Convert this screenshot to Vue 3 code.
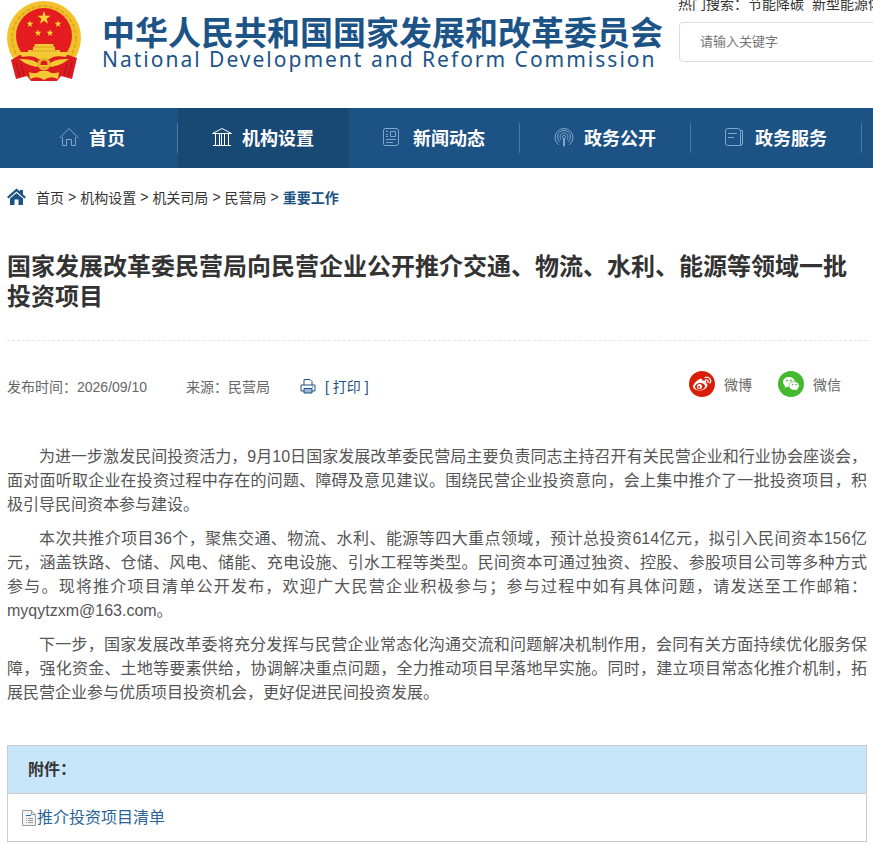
<template>
  <div class="page">
    <!-- Header -->
    <header class="top">
      <a class="brand" href="#">
        <svg class="emblem" viewBox="0 0 76 82" aria-hidden="true">
          <circle cx="38" cy="38" r="37" fill="#f3c22b" />
          <circle cx="38" cy="38" r="32" fill="none" stroke="#e0a822" stroke-width="2" stroke-dasharray="4 2" />
          <circle cx="38" cy="36" r="28" fill="#e41b1f" />
          <path d="M14 55 L62 55 L71 58 L66 79 L55 76 L51 81 H25 L21 76 L10 79 L5 60 Z" fill="#dc1c20" />
          <path d="M14 52 H62 L60 57 Q48 55 44 59 H32 Q28 55 16 57 Z" fill="#f5c933" />
          <path d="M29 44 H47 L48 47 H49 V50 H54 V52 H62 V55 H14 V52 H22 V50 H27 V47 H28 Z" fill="#f5c933" />
          <path d="M28 47 H48 M25 51 H51" stroke="#dca326" stroke-width="1" />
          <path d="M13 59 Q28 58 34 65 H42 Q48 58 63 59 Q53 67 42 67 H34 Q23 67 13 59Z" fill="#f5c933" />
          <circle cx="38" cy="64" r="5" fill="none" stroke="#e8b32a" stroke-width="3" />
          <path d="M23 72 Q30 75 34 71 H42 Q46 75 53 72 L52 79 Q44 75 38 80 Q32 75 24 79Z" fill="#f5c933" />
          <path d="M10 63 L14 76 M15 64 L18 75 M66 63 L62 76 M61 64 L58 75" stroke="#a91118" stroke-width="1" />
          <path v-for="s in stars" :key="s.at" :transform="s.at" :d="starPath" fill="#fbd536" />
        </svg>
        <span class="brand-text">
          <strong>中华人民共和国国家发展和改革委员会</strong>
          <span class="brand-en">National Development and Reform Commission</span>
        </span>
      </a>
      <div class="search">
        <div class="hot">热门搜索：<a href="#">节能降碳</a><a href="#">新型能源体系</a></div>
        <input type="text" placeholder="请输入关键字" aria-label="请输入关键字" />
      </div>
    </header>

    <!-- Nav -->
    <nav class="nav">
      <a v-for="item in nav" :key="item.name" href="#" class="nav-item" :class="{ active: item.active }">
        <svg class="nav-icon" viewBox="0 0 20 20" aria-hidden="true">
          <path :d="item.icon" />
        </svg>
        {{ item.name }}
      </a>
    </nav>

    <main class="main">
      <!-- Breadcrumb -->
      <div class="crumbs">
        <svg class="home" viewBox="0 0 20 18" aria-hidden="true">
          <path d="M0 9 L9.500 0.500 L13 3.500 V2 H16 V6.500 L19 9 L17.500 10.500 L9.500 3.500 L1.500 10.500 Z" />
          <path d="M3 10.500 L9.500 5 L16 10.500 V17 H11.500 V11.500 H7.500 V17 H3 Z" />
        </svg>
        <template v-for="c in crumbs" :key="c"><a href="#">{{ c }}</a> &gt; </template>
        <a class="current" href="#">重要工作</a>
      </div>

      <h1>国家发展改革委民营局向民营企业公开推介交通、物流、水利、能源等领域一批投资项目</h1>

      <!-- Meta -->
      <div class="meta">
        <span>发布时间：2026/09/10</span>
        <span class="source">来源：民营局</span>
        <a class="print" href="#">
          <svg viewBox="0 0 16 16" aria-hidden="true">
            <path d="M4 7 V1.500 H10 L12 3.500 V7 M4 13 H1 V7 H15 V13 H12" />
            <path class="tray" d="M4 10.500 H12 V15 H4 Z" />
            <path d="M12 9 H13" />
          </svg>
          [ 打印 ]
        </a>
        <div class="share">
          <a href="#">
            <svg viewBox="0 0 26 26" aria-hidden="true">
              <circle cx="13" cy="13" r="13" fill="#d81e06" />
              <path d="M11 8 C13 7 14 9 13 10 C16 9 18 10 17 12 C19 13 19 15 17 17 C13 21 5 20 4 16 C4 13 8 9 11 8Z" fill="#fff" />
              <ellipse cx="11" cy="15.500" rx="5" ry="3.500" fill="#d81e06" transform="rotate(-9 11 15.500)" />
              <circle cx="10.500" cy="15.500" r="2.500" fill="#fff" />
              <circle cx="10" cy="16" r="1" fill="#d81e06" />
              <path d="M16 6.500 C20 5 23 9 21 12 M16.500 9 C18.500 8.500 19.500 10 19 11.500" fill="none" stroke="#fff" stroke-width="1.300" stroke-linecap="round" />
            </svg>
            微博
          </a>
          <a href="#">
            <svg viewBox="0 0 26 26" aria-hidden="true">
              <circle cx="13" cy="13" r="13" fill="#44b82e" />
              <path d="M11 6 C7.500 6 5 8.300 5 11 C5 12.700 5.900 14 7.300 15 L6.700 17 L9 15.800 C14 17 17.500 14 17 10.500 C16.500 8 14 6 11 6Z" fill="#fff" />
              <path d="M16 10.500 C13 10.500 11 12.500 11 14.800 C11 18 14.500 19.700 17.700 18.900 L19.600 20 L19.200 18.200 C20.500 17.300 21.200 16.200 21.200 14.800 C21.200 12.400 18.900 10.500 16 10.500Z" fill="#fff" stroke="#44b82e" stroke-width="0.600" />
              <g fill="#44b82e">
                <circle cx="9" cy="9.500" r="0.900" />
                <circle cx="13" cy="9.500" r="0.900" />
                <circle cx="14.500" cy="13.500" r="0.800" />
                <circle cx="18" cy="13.500" r="0.800" />
              </g>
            </svg>
            微信
          </a>
        </div>
      </div>

      <!-- Article -->
      <article class="article">
        <p v-for="p in paragraphs" :key="p">{{ p }}</p>
      </article>

      <!-- Attachments -->
      <section class="attach">
        <h2>附件：</h2>
        <div class="attach-list">
          <a href="#">
            <svg viewBox="0 0 16 16" aria-hidden="true">
              <path d="M1.500 0.500 H10.500 L14.500 4.500 V15.500 H1.500 Z" fill="#f4f4f4" stroke="#999" />
              <path d="M10.500 0.500 V4.500 H14.500" fill="#ddd" stroke="#999" />
              <path d="M5 5.500 H10" stroke="#2b6cb0" />
              <path d="M5 8.500 H6 M7 8.500 H12 M5 10.500 H6 M7 10.500 H12 M5 12.500 H6 M7 12.500 H12" stroke="#999" />
            </svg>推介投资项目清单</a>
        </div>
      </section>
    </main>
  </div>
</template>

<script setup>
const starPath = 'M0 -6 L1.400 -1.900 L5.700 -1.900 L2.300 0.700 L3.500 4.900 L0 2.400 L-3.500 4.900 L-2.300 0.700 L-5.700 -1.900 L-1.400 -1.900 Z'

const stars = [
  { at: 'translate(38 18) scale(1.150)' },
  { at: 'translate(24 24) scale(0.600)' },
  { at: 'translate(52 24) scale(0.600)' },
  { at: 'translate(32 33) scale(0.600)' },
  { at: 'translate(44 33) scale(0.600)' }
]

const nav = [
  { name: '首页', icon: 'M0.500 11 L10 1.500 L19.500 11 M3.500 10 V18.500 H7.500 V12.500 H12.500 V18.500 H16.500 V10' },
  { name: '机构设置', active: true, icon: 'M0.500 6.500 L10 1.500 L19.500 6.500 Z M1 18.500 H19 M3.500 7 V18 M7.500 7 V18 M9.500 7 V18 M12.500 7 V18 M16.500 7 V18' },
  { name: '新闻动态', icon: 'M2 1.500 H13 Q15.500 1.500 15.500 4 V16 Q15.500 18.500 13 18.500 H2 Q0.500 18.500 0.500 16 V4 Q0.500 1.500 2 1.500 Z M7.500 4.500 H12.500 V9.500 H7.500 Z M3 4.500 H5 M3 7.500 H5 M3 9.500 H5 M3 12.500 H13 M3 15.500 H10' },
  { name: '政务公开', icon: 'M5 18 A9 9 0 1 1 15 18 M6 15 A6.500 6.500 0 1 1 14 15 M7.500 13 A4 4 0 1 1 12.500 13 M9 11 A1.500 1.500 0 1 1 11 11 M9.500 11 V19 H10.500 V11' },
  { name: '政务服务', icon: 'M2.500 1.500 H12 Q15.500 1.500 15.500 4 V18.500 H2.500 Q0.500 18.500 0.500 16 V4 Q0.500 1.500 2.500 1.500 Z M15.500 3.500 H17.500 V16 Q17.500 18.500 15.500 18.500 M3 6.500 H12 M3 10.500 H9' }
]

const crumbs = ['首页', '机构设置', '机关司局', '民营局']

const paragraphs = [
  '为进一步激发民间投资活力，9月10日国家发展改革委民营局主要负责同志主持召开有关民营企业和行业协会座谈会，面对面听取企业在投资过程中存在的问题、障碍及意见建议。围绕民营企业投资意向，会上集中推介了一批投资项目，积极引导民间资本参与建设。',
  '本次共推介项目36个，聚焦交通、物流、水利、能源等四大重点领域，预计总投资614亿元，拟引入民间资本156亿元，涵盖铁路、仓储、风电、储能、充电设施、引水工程等类型。民间资本可通过独资、控股、参股项目公司等多种方式参与。现将推介项目清单公开发布，欢迎广大民营企业积极参与；参与过程中如有具体问题，请发送至工作邮箱：myqytzxm@163.com。',
  '下一步，国家发展改革委将充分发挥与民营企业常态化沟通交流和问题解决机制作用，会同有关方面持续优化服务保障，强化资金、土地等要素供给，协调解决重点问题，全力推动项目早落地早实施。同时，建立项目常态化推介机制，拓展民营企业参与优质项目投资机会，更好促进民间投资发展。'
]
</script>

<style>
body {
  background: #fff;
}
</style>

<style scoped>
.page {
  overflow: hidden;
  font-family: "Liberation Sans", "Noto Sans CJK SC", sans-serif;
  font-size: 14px;
  color: #333;
  text-spacing-trim: space-all;
}
a {
  color: inherit;
  text-decoration: none;
}

.top {
  display: flex;
  align-items: flex-start;
  height: 108px;
  padding-left: 6px;
}
.brand {
  display: flex;
  flex: none;
  width: 672px;
  color: #1c5487;
}
.emblem {
  width: 76px;
  height: 82px;
}
.brand-text {
  display: flex;
  flex-direction: column;
  padding: 18px 0 0 20px;
  white-space: nowrap;
}
.brand-text strong {
  font-size: 33px;
  line-height: 32px;
}
.brand-en {
  font-family: "Noto Sans", sans-serif;
  font-size: 21px;
  line-height: 18px;
  letter-spacing: 2px;
}
.search {
  flex: 1 0 240px;
}
.hot {
  margin-top: -6px;
  line-height: 20px;
  white-space: nowrap;
}
.hot a {
  margin-right: 8px;
}
.search input {
  box-sizing: border-box;
  width: 100%;
  height: 40px;
  margin: 8px 0 0 1px;
  padding: 0 20px 2px;
  border: 1px solid #ddd;
  border-radius: 4px;
  font-family: inherit;
  font-size: 13px;
}
.search input::placeholder {
  color: #757575;
}

.nav {
  display: flex;
  height: 60px;
  padding-left: 7px;
  background: #1c5284;
}
.nav-item {
  box-sizing: border-box;
  display: flex;
  flex: 0 0 171px;
  align-items: center;
  justify-content: center;
  gap: 10px;
  padding: 0 1px 2px 0;
  font-size: 18px;
  font-weight: bold;
  color: #fff;
  background: linear-gradient(#4a7ba6, #4a7ba6) right center / 1px 30px no-repeat;
}
.nav-item.active {
  background: #174974;
}
.nav-icon {
  width: 20px;
  height: 20px;
  fill: none;
  stroke: #80a8cd;
  stroke-width: 1;
}
.active .nav-icon {
  stroke: #fff;
}

.main {
  padding: 0 6px 3px 7px;
}
.crumbs {
  box-sizing: border-box;
  display: flex;
  align-items: center;
  gap: 4px;
  height: 60px;
  padding-bottom: 2px;
}
.home {
  width: 20px;
  height: 18px;
  margin-right: 5px;
  fill: #1c5284;
}
.current {
  font-weight: bold;
  color: #1c5284;
}

h1 {
  margin: 0;
  padding: 24px 0 28px;
  border-bottom: 1px dashed #e5e5e5;
  font-size: 24px;
  line-height: 30px;
}

.meta {
  box-sizing: border-box;
  display: flex;
  align-items: center;
  height: 92px;
  padding-bottom: 2px;
  color: #666;
}
.source {
  margin-left: 39px;
}
.print {
  display: flex;
  align-items: center;
  gap: 9px;
  margin-left: 30px;
  color: #1c5284;
}
.print svg {
  width: 16px;
  height: 16px;
  fill: none;
  stroke: #1c5284;
}
.print .tray {
  fill: #9db9d3;
}
.share {
  display: flex;
  gap: 26px;
  margin: 0 26px 4px auto;
}
.share a {
  display: flex;
  align-items: center;
  gap: 9px;
}
.share svg {
  width: 26px;
  height: 26px;
}

.article {
  padding-top: 12px;
  color: #555;
}
.article p {
  margin: 0 0 10px;
  font-size: 16px;
  line-height: 24px;
  text-align: justify;
  text-indent: 32px;
}

.attach {
  margin-top: 40px;
  border: 1px solid #ccc;
}
.attach h2 {
  margin: 0;
  padding-left: 20px;
  background: #c8e6fa;
  border-bottom: 1px solid #ccc;
  font-size: 16px;
  line-height: 47px;
}
.attach-list {
  padding-left: 13px;
  font-size: 16px;
  line-height: 47px;
  color: #2a6496;
}
.attach-list a {
  display: flex;
  align-items: center;
}
.attach-list svg {
  width: 16px;
  height: 16px;
}
</style>
